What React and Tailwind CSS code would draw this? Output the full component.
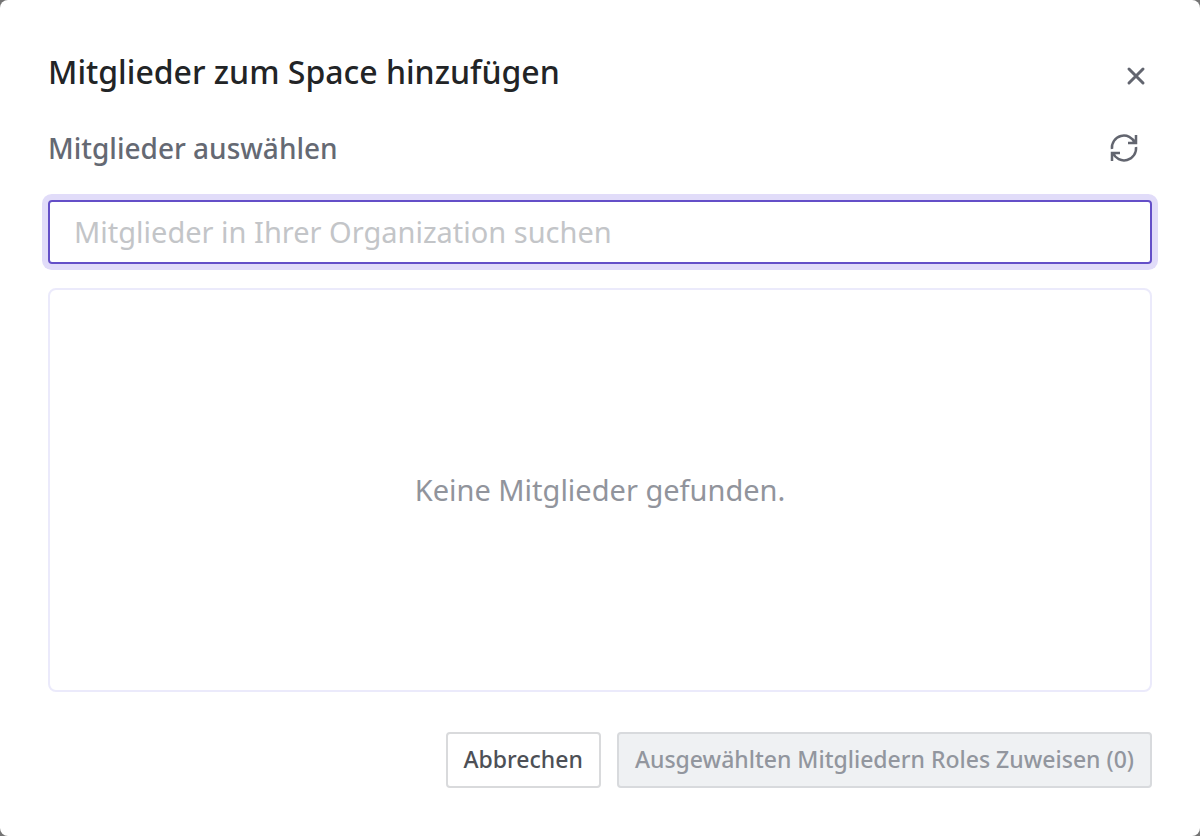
import { useState } from "react";

export default function App() {
  const [query, setQuery] = useState("");
  return (
    <div className="bg-[#747474] font-['Noto_Sans',sans-serif]">
      <main role="dialog" aria-labelledby="title" className="flex min-h-screen flex-col rounded-lg bg-white p-12">
        <header className="flex items-center justify-between">
          <h1 id="title" className="text-[32px] leading-12 font-medium text-[#222426]">Mitglieder zum Space hinzufügen</h1>
          <button type="button" aria-label="Schließen" className="mt-2 flex size-8 items-center justify-center text-[#62656f]">
            <svg viewBox="0 0 20 20" className="size-5" fill="none" stroke="currentColor" strokeWidth="3" strokeLinecap="round"><path d="M3 3l14 14M17 3L3 17" /></svg>
          </button>
        </header>
        <div className="mt-7 flex items-center justify-between">
          <label htmlFor="search" className="text-[28px] leading-12 font-medium text-[#656973]">Mitglieder auswählen</label>
          <button type="button" aria-label="Aktualisieren" className="mr-3 flex size-8 items-center justify-center text-[#62656f]">
            <svg viewBox="0 0 32 32" className="size-8" fill="none" stroke="currentColor" strokeWidth="2.5"><path d="M28 3v8h-8M4 29v-8h8M4 17a12 12 0 0 1 23-6M28 15a12 12 0 0 1-23 6" /></svg>
          </button>
        </div>
        <input
          id="search"
          type="text"
          value={query}
          onChange={(e) => setQuery(e.target.value)}
          placeholder="Mitglieder in Ihrer Organization suchen"
          className="mt-7 h-16 w-full rounded-sm border-2 border-[#644fc8] px-6 pb-0.5 text-[29px] text-[#222426] ring-6 ring-[#e1dcf9] outline-none placeholder:text-[#c3c5c8]"
        />
        <section className="mt-6 flex min-h-101 grow items-center justify-center rounded-lg border-2 border-[#ebeafb]">
          <p className="text-[29px] text-[#91949c]">Keine Mitglieder gefunden.</p>
        </section>
        <footer className="mt-10 flex justify-end gap-4">
          <button type="button" className="h-14 rounded-sm border-2 border-[#d9dadc] px-4 pb-0.5 text-[23px] font-medium text-[#4d5056]">Abbrechen</button>
          <button type="button" disabled className="h-14 rounded-sm border-2 border-[#d8dadd] bg-[#eff1f3] px-4 pb-0.5 text-[23px] font-medium text-[#92969e]">Ausgewählten Mitgliedern Roles Zuweisen (0)</button>
        </footer>
      </main>
    </div>
  );
}
